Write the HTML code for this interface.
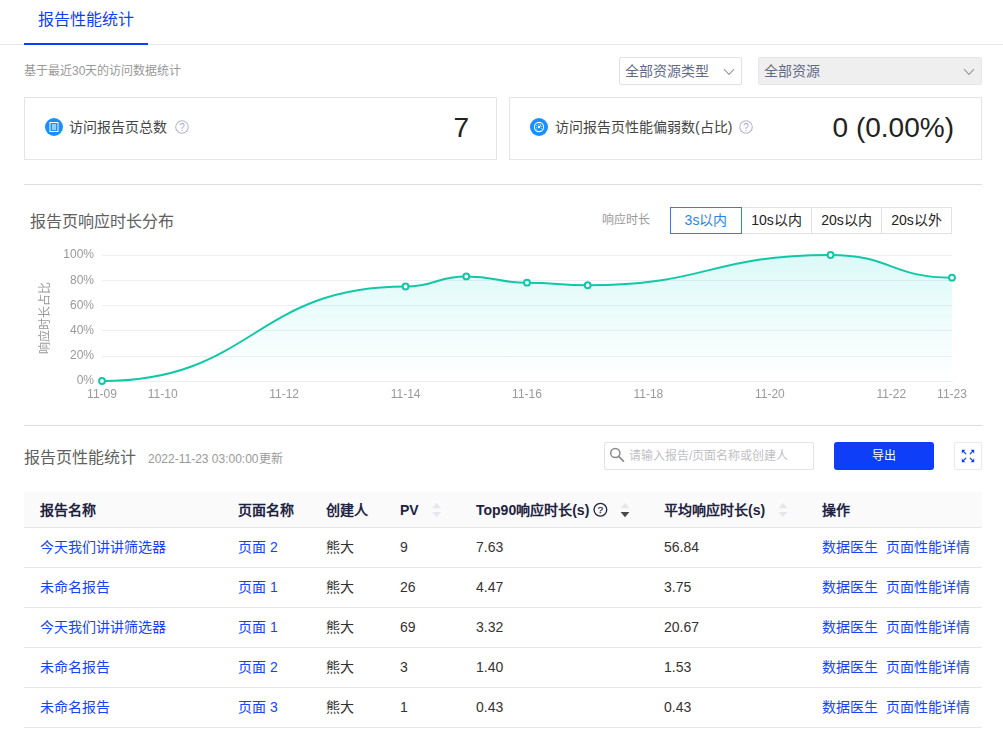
<!DOCTYPE html>
<html lang="zh-CN">
<head>
<meta charset="utf-8">
<title>报告性能统计</title>
<style>
*{box-sizing:border-box;margin:0;padding:0}
html,body{width:1003px;height:730px;overflow:hidden;background:#fff}
body{font-family:"Liberation Sans",sans-serif;font-size:14px;color:#333;position:relative}
.abs{position:absolute}
.nw{white-space:nowrap}
/* tab bar */
.tabline{left:0;top:44px;width:1003px;height:1px;background:#e6e7ee}
.tab{left:24px;top:0;width:124px;height:45px;border-bottom:2px solid #0f3ef8;color:#0f3ef8;font-size:16px;line-height:22px;padding:9px 14px 0 14px}
.sub{left:24px;top:63px;font-size:12px;line-height:17px;color:#999}
/* selects */
.sel{top:57px;height:28px;border:1px solid #dfe0ea;border-radius:2px;font-size:14px;line-height:26px;color:#636a86;padding-left:5px;background:#fff}
.sel.dis{background:#efefef;border-color:#e6e6ea}
.sel svg{position:absolute;top:10px;right:6px}
/* cards */
.card{top:97px;height:63px;width:473px;border:1px solid #e5e5e8}
.card .lbl{position:absolute;top:19px;font-size:14px;line-height:20px;color:#444;white-space:nowrap}
.card .val{position:absolute;top:9.6px;right:27px;font-size:28px;line-height:40px;color:#222;white-space:nowrap}
.ico{position:absolute;width:18px;height:18px;top:20px}
.q{position:absolute;width:14px;height:14px;top:21.5px}
.hr{left:24px;width:958px;height:1px;background:#dedede}
/* chart */
.h2{font-size:16px;line-height:22px;color:#606060;white-space:nowrap}
.rlabel{left:602px;top:212px;font-size:12px;line-height:17px;color:#999}
.btn{top:207px;height:27px;border:1px solid #e2e2e2;font-size:14px;line-height:25px;text-align:center;color:#222;white-space:nowrap;background:#fff}
.btn.on{border-color:#2f80de;color:#2b84e6;z-index:2}
/* table */
.upd{left:148px;top:451px;font-size:12px;line-height:17px;color:#999}
.search{left:604px;top:442px;width:210px;height:28px;border:1px solid #e2e3e8;border-radius:2px;font-size:12px;line-height:26px;color:#c0c0c4;padding-left:24px}
.export{left:834px;top:442px;width:100px;height:28px;border-radius:3px;background:#0f3ef8;color:#fff;font-size:12px;line-height:28px;text-align:center}
.full{left:954px;top:442px;width:28px;height:28px;border:1px solid #e8e8f1;border-radius:2px;background:#fff}
.thead{left:24px;top:492px;width:958px;height:36px;background:#fafafa;border-bottom:1px solid #e6e6e6}
.th{top:500px;font-size:14px;line-height:20px;font-weight:bold;color:#1d2340;white-space:nowrap}
.row{left:24px;width:958px;height:40px;border-bottom:1px solid #e6e6e6}
.td{position:absolute;top:9px;font-size:14px;line-height:20px;color:#333;white-space:nowrap}
.td.a{color:#1743fa}
</style>
</head>
<body>
<!-- TAB BAR -->
<div class="abs tabline"></div>
<div class="abs tab nw">报告性能统计</div>
<div class="abs sub nw">基于最近30天的访问数据统计</div>

<!-- SELECTS -->
<div class="abs sel nw" style="left:619px;width:123px">全部资源类型<svg width="12" height="8" viewBox="0 0 12 8"><path d="M1 1.2 L6 6.4 L11 1.2" fill="none" stroke="#999" stroke-width="1.1"/></svg></div>
<div class="abs sel dis nw" style="left:758px;width:224px">全部资源<svg width="12" height="8" viewBox="0 0 12 8"><path d="M1 1.2 L6 6.4 L11 1.2" fill="none" stroke="#999" stroke-width="1.1"/></svg></div>

<!-- CARDS -->
<div class="abs card" style="left:24px">
  <svg class="ico" style="left:20px" viewBox="0 0 18 18"><circle cx="9" cy="9" r="9" fill="#1890ff"/><rect x="5" y="4.5" width="8" height="9" fill="none" stroke="#fff" stroke-width="1"/><rect x="7" y="6" width="4" height="6" fill="#fff" fill-opacity="0.55"/></svg>
  <div class="lbl" style="left:44px">访问报告页总数</div>
  <svg class="q" style="left:150px" viewBox="0 0 14 14"><circle cx="7" cy="7" r="6.3" fill="none" stroke="#b3b5cc" stroke-width="1.05"/><text x="7" y="10.6" font-size="10" text-anchor="middle" fill="#a4a6c2" font-family="Liberation Sans">?</text></svg>
  <div class="val">7</div>
</div>
<div class="abs card" style="left:509px">
  <svg class="ico" style="left:20px" viewBox="0 0 18 18"><circle cx="9" cy="9" r="9" fill="#1890ff"/><circle cx="9" cy="9" r="4.6" fill="none" stroke="#fff" stroke-width="1.1"/><circle cx="9" cy="9" r="1.25" fill="#fff"/><path d="M9 9 L11 7" stroke="#fff" stroke-width="1" fill="none" stroke-opacity="0.95"/><g fill="#fff" fill-opacity="0.85"><circle cx="6.3" cy="9.6" r="0.5"/><circle cx="6.7" cy="7.4" r="0.5"/><circle cx="8.3" cy="6.2" r="0.5"/><circle cx="10.2" cy="6.3" r="0.5"/><circle cx="11.7" cy="8.6" r="0.5"/><circle cx="11.4" cy="10.4" r="0.5"/><circle cx="6.8" cy="10.9" r="0.5"/></g></svg>
  <div class="lbl" style="left:45px">访问报告页性能偏弱数(占比)</div>
  <svg class="q" style="left:229px" viewBox="0 0 14 14"><circle cx="7" cy="7" r="6.3" fill="none" stroke="#b3b5cc" stroke-width="1.05"/><text x="7" y="10.6" font-size="10" text-anchor="middle" fill="#a4a6c2" font-family="Liberation Sans">?</text></svg>
  <div class="val">0 (0.00%)</div>
</div>
<div class="abs hr" style="top:184px"></div>

<!-- CHART -->
<div class="abs h2" style="left:30px;top:211px">报告页响应时长分布</div>
<div class="abs rlabel nw">响应时长</div>
<div class="abs btn on" style="left:670px;width:72px">3s以内</div>
<div class="abs btn" style="left:741px;width:71px">10s以内</div>
<div class="abs btn" style="left:811px;width:71px">20s以内</div>
<div class="abs btn" style="left:881px;width:71px">20s以外</div>
<svg class="abs" id="chart" style="left:0;top:240px;will-change:transform" width="1003" height="170" viewBox="0 240 1003 170">
<defs><linearGradient id="ag" x1="0" y1="255" x2="0" y2="381" gradientUnits="userSpaceOnUse"><stop offset="0" stop-color="#00d9ca" stop-opacity="0.138"/><stop offset="1" stop-color="#00d9ca" stop-opacity="0"/></linearGradient></defs>
<line x1="102" x2="952" y1="255.5" y2="255.5" stroke="#edeef4" stroke-width="1"/>
<text x="94" y="258.0" text-anchor="end" font-size="12" fill="#999" font-family="Liberation Sans">100%</text>
<line x1="102" x2="952" y1="280.5" y2="280.5" stroke="#edeef4" stroke-width="1"/>
<text x="94" y="284.0" text-anchor="end" font-size="12" fill="#999" font-family="Liberation Sans">80%</text>
<line x1="102" x2="952" y1="305.5" y2="305.5" stroke="#edeef4" stroke-width="1"/>
<text x="94" y="309.0" text-anchor="end" font-size="12" fill="#999" font-family="Liberation Sans">60%</text>
<line x1="102" x2="952" y1="330.5" y2="330.5" stroke="#edeef4" stroke-width="1"/>
<text x="94" y="334.0" text-anchor="end" font-size="12" fill="#999" font-family="Liberation Sans">40%</text>
<line x1="102" x2="952" y1="356.5" y2="356.5" stroke="#edeef4" stroke-width="1"/>
<text x="94" y="359.0" text-anchor="end" font-size="12" fill="#999" font-family="Liberation Sans">20%</text>
<line x1="102" x2="953" y1="381.5" y2="381.5" stroke="#edeef4" stroke-width="1"/>
<text x="94" y="384.0" text-anchor="end" font-size="12" fill="#999" font-family="Liberation Sans">0%</text>
<text x="102.0" y="398" text-anchor="middle" font-size="12" fill="#999" font-family="Liberation Sans">11-09</text>
<text x="162.7" y="398" text-anchor="middle" font-size="12" fill="#999" font-family="Liberation Sans">11-10</text>
<text x="284.1" y="398" text-anchor="middle" font-size="12" fill="#999" font-family="Liberation Sans">11-12</text>
<text x="405.6" y="398" text-anchor="middle" font-size="12" fill="#999" font-family="Liberation Sans">11-14</text>
<text x="527.0" y="398" text-anchor="middle" font-size="12" fill="#999" font-family="Liberation Sans">11-16</text>
<text x="648.4" y="398" text-anchor="middle" font-size="12" fill="#999" font-family="Liberation Sans">11-18</text>
<text x="769.9" y="398" text-anchor="middle" font-size="12" fill="#999" font-family="Liberation Sans">11-20</text>
<text x="891.3" y="398" text-anchor="middle" font-size="12" fill="#999" font-family="Liberation Sans">11-22</text>
<text x="952.0" y="398" text-anchor="middle" font-size="12" fill="#999" font-family="Liberation Sans">11-23</text>
<text transform="translate(48.5 318) rotate(-90)" text-anchor="middle" font-size="12" fill="#999" font-family="Liberation Sans">响应时长占比</text>
<path d="M102.00 381.00 C253.79 381.00 253.79 286.50 405.57 286.50 C435.93 286.50 435.93 276.42 466.29 276.42 C496.64 276.42 496.64 282.72 527.00 282.72 C557.36 282.72 557.36 285.24 587.71 285.24 C709.14 285.24 709.14 255.00 830.57 255.00 C891.29 255.00 891.29 277.68 952.00 277.68 L952.00 381.00 L102.00 381.00 Z" fill="url(#ag)"/>
<path d="M102.00 381.00 C253.79 381.00 253.79 286.50 405.57 286.50 C435.93 286.50 435.93 276.42 466.29 276.42 C496.64 276.42 496.64 282.72 527.00 282.72 C557.36 282.72 557.36 285.24 587.71 285.24 C709.14 285.24 709.14 255.00 830.57 255.00 C891.29 255.00 891.29 277.68 952.00 277.68" fill="none" stroke="#10c8a8" stroke-width="2" stroke-linejoin="round"/>
<circle cx="102.00" cy="381.00" r="2.9" fill="#fff" stroke="#10c8a8" stroke-width="2"/>
<circle cx="405.57" cy="286.50" r="2.9" fill="#fff" stroke="#10c8a8" stroke-width="2"/>
<circle cx="466.29" cy="276.42" r="2.9" fill="#fff" stroke="#10c8a8" stroke-width="2"/>
<circle cx="527.00" cy="282.72" r="2.9" fill="#fff" stroke="#10c8a8" stroke-width="2"/>
<circle cx="587.71" cy="285.24" r="2.9" fill="#fff" stroke="#10c8a8" stroke-width="2"/>
<circle cx="830.57" cy="255.00" r="2.9" fill="#fff" stroke="#10c8a8" stroke-width="2"/>
<circle cx="952.00" cy="277.68" r="2.9" fill="#fff" stroke="#10c8a8" stroke-width="2"/>
</svg>

<div class="abs hr" style="top:425px"></div>

<!-- TABLE -->
<div class="abs h2" style="left:24px;top:447px">报告页性能统计</div>
<div class="abs upd nw">2022-11-23 03:00:00更新</div>
<div class="abs search nw"><svg style="position:absolute;left:0;top:0" width="26" height="26" viewBox="0 0 26 26"><circle cx="10.3" cy="10" r="4.6" fill="none" stroke="#8a8a8a" stroke-width="1.5"/><path d="M13.7 13.4 L18.4 18.1" stroke="#8a8a8a" stroke-width="1.7" stroke-linecap="round"/></svg>请输入报告/页面名称或创建人</div>
<div class="abs export">导出</div>
<div class="abs full"><svg style="position:absolute;left:0;top:0" width="26" height="26" viewBox="-13 -13 26 26" fill="#0f3ef8"><path d="M-6.2 -6.2 L-2.6 -6.2 L-6.2 -2.6 Z"/><path d="M-5 -5 L-2.2 -2.2" stroke="#0f3ef8" stroke-width="1.15" stroke-linecap="round" fill="none"/><g transform="scale(-1 1)"><path d="M-6.2 -6.2 L-2.6 -6.2 L-6.2 -2.6 Z"/><path d="M-5 -5 L-2.2 -2.2" stroke="#0f3ef8" stroke-width="1.15" stroke-linecap="round" fill="none"/></g><g transform="scale(1 -1)"><path d="M-6.2 -6.2 L-2.6 -6.2 L-6.2 -2.6 Z"/><path d="M-5 -5 L-2.2 -2.2" stroke="#0f3ef8" stroke-width="1.15" stroke-linecap="round" fill="none"/></g><g transform="scale(-1 -1)"><path d="M-6.2 -6.2 L-2.6 -6.2 L-6.2 -2.6 Z"/><path d="M-5 -5 L-2.2 -2.2" stroke="#0f3ef8" stroke-width="1.15" stroke-linecap="round" fill="none"/></g></svg></div>
<div class="abs thead"></div>
<svg class="abs" style="left:0;top:492px" width="1003" height="36" viewBox="0 492 1003 36"><path d="M436.6 503 L432.2 508.2 L441.0 508.2 Z" fill="#e6e6ef"/><path d="M436.6 517.2 L432.2 512 L441.0 512 Z" fill="#e6e6ef"/><path d="M625.0 503 L620.6 508.2 L629.4 508.2 Z" fill="#e6e6ef"/><path d="M625.0 517.2 L620.6 512 L629.4 512 Z" fill="#4a4a4a"/><path d="M783.0 503 L778.6 508.2 L787.4 508.2 Z" fill="#e6e6ef"/><path d="M783.0 517.2 L778.6 512 L787.4 512 Z" fill="#e6e6ef"/><circle cx="600.4" cy="509.8" r="6.35" fill="none" stroke="#1d2340" stroke-width="1.3"/><text x="600.4" y="513.1" font-size="9.5" text-anchor="middle" fill="#1d2340" stroke="#1d2340" stroke-width="0.25" font-family="Liberation Sans">?</text></svg>
<div class="abs th" style="left:40px">报告名称</div>
<div class="abs th" style="left:238px">页面名称</div>
<div class="abs th" style="left:326px">创建人</div>
<div class="abs th" style="left:400px">PV</div>
<div class="abs th" style="left:476px">Top90响应时长(s)</div>
<div class="abs th" style="left:664px">平均响应时长(s)</div>
<div class="abs th" style="left:822px">操作</div>

<div class="abs row" style="top:528px"><span class="td a" style="left:16px">今天我们讲讲筛选器</span><span class="td a" style="left:214px">页面 2</span><span class="td" style="left:302px">熊大</span><span class="td" style="left:376px">9</span><span class="td" style="left:452px">7.63</span><span class="td" style="left:640px">56.84</span><span class="td a" style="left:798px">数据医生</span><span class="td a" style="left:862px">页面性能详情</span></div>
<div class="abs row" style="top:568px"><span class="td a" style="left:16px">未命名报告</span><span class="td a" style="left:214px">页面 1</span><span class="td" style="left:302px">熊大</span><span class="td" style="left:376px">26</span><span class="td" style="left:452px">4.47</span><span class="td" style="left:640px">3.75</span><span class="td a" style="left:798px">数据医生</span><span class="td a" style="left:862px">页面性能详情</span></div>
<div class="abs row" style="top:608px"><span class="td a" style="left:16px">今天我们讲讲筛选器</span><span class="td a" style="left:214px">页面 1</span><span class="td" style="left:302px">熊大</span><span class="td" style="left:376px">69</span><span class="td" style="left:452px">3.32</span><span class="td" style="left:640px">20.67</span><span class="td a" style="left:798px">数据医生</span><span class="td a" style="left:862px">页面性能详情</span></div>
<div class="abs row" style="top:648px"><span class="td a" style="left:16px">未命名报告</span><span class="td a" style="left:214px">页面 2</span><span class="td" style="left:302px">熊大</span><span class="td" style="left:376px">3</span><span class="td" style="left:452px">1.40</span><span class="td" style="left:640px">1.53</span><span class="td a" style="left:798px">数据医生</span><span class="td a" style="left:862px">页面性能详情</span></div>
<div class="abs row" style="top:688px"><span class="td a" style="left:16px">未命名报告</span><span class="td a" style="left:214px">页面 3</span><span class="td" style="left:302px">熊大</span><span class="td" style="left:376px">1</span><span class="td" style="left:452px">0.43</span><span class="td" style="left:640px">0.43</span><span class="td a" style="left:798px">数据医生</span><span class="td a" style="left:862px">页面性能详情</span></div>
</body>
</html>
